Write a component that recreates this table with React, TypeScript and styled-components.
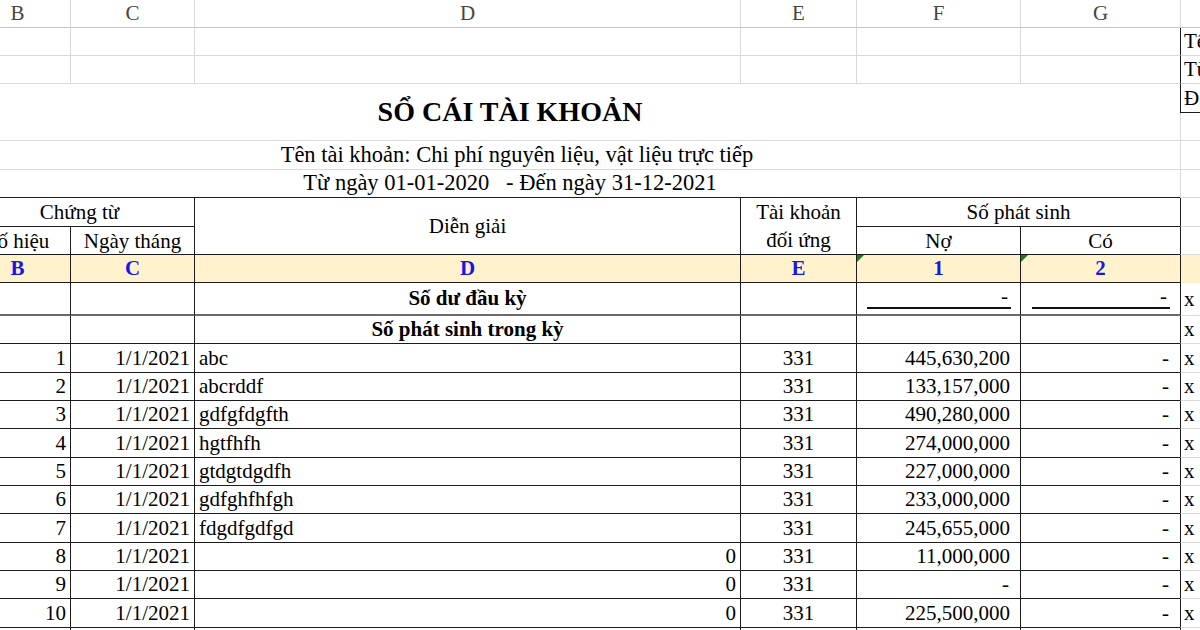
import React from 'react';
import styled, { createGlobalStyle } from 'styled-components';

const Global = createGlobalStyle`
  html, body { margin: 0; padding: 0; background: #fff; overflow: hidden; }
  body { font-family: "Liberation Serif", "Times New Roman", serif; color: #000; }
`;

const GRID = '#d9d9d9';
const HEADLINE = '#c6c6c6';
const INK = '#1c1c1c';
const FILL = '#fff2cc';

const COLS = [106, 124, 546, 116, 164, 159, 120];
const ROWS = [28, 28, 28, 29, 28, 29, 28, 29, 28, 28, 33, 28, 29, 28, 28, 29, 28, 28, 29, 28, 28, 29, 28];

const Sheet = styled.div`
  display: grid;
  grid-template-columns: ${COLS.map((c) => `${c}px`).join(' ')};
  grid-template-rows: ${ROWS.map((r) => `${r}px`).join(' ')};
  margin-left: -35px;
  width: ${COLS.reduce((a, b) => a + b, 0)}px;
`;

interface Place {
  $col: number;
  $row: number;
  $cs?: number;
  $rs?: number;
  $r?: string;
  $b?: string;
  $bw?: number;
  $l?: string;
  $fill?: string;
}

const Cell = styled.div<Place>`
  grid-column: ${(p) => `${p.$col} / span ${p.$cs ?? 1}`};
  grid-row: ${(p) => `${p.$row} / span ${p.$rs ?? 1}`};
  box-sizing: border-box;
  min-width: 0;
  display: flex;
  align-items: center;
  overflow: hidden;
  white-space: nowrap;
  position: relative;
  font-size: 21px;
  line-height: 1;
  background: ${(p) => p.$fill ?? 'transparent'};
  border-right: ${(p) => (p.$r ? `1px solid ${p.$r}` : '0')};
  border-bottom: ${(p) => (p.$b ? `${p.$bw ?? 1}px solid ${p.$b}` : '0')};
  border-left: ${(p) => (p.$l ? `1px solid ${p.$l}` : '0')};
`;

const Letter = styled(Cell)`
  justify-content: center;
  color: #454545;
  font-size: 21px;
`;

const Banner = styled(Cell)<{ $shift: number; $title?: boolean }>`
  justify-content: center;
  padding-right: ${(p) => p.$shift}px;
  font-size: ${(p) => (p.$title ? 28 : 22.5)}px;
  font-weight: ${(p) => (p.$title ? 700 : 400)};
`;

const Head = styled(Cell)`
  justify-content: center;
  text-align: center;
  white-space: normal;
  line-height: 28px;
`;

const Code = styled(Cell)<{ $flag?: boolean }>`
  justify-content: center;
  font-weight: 700;
  color: #1616e6;
  background: ${FILL};
  &::before {
    content: '';
    display: ${(p) => (p.$flag ? 'block' : 'none')};
    position: absolute;
    top: 0;
    left: 0;
    border-top: 7px solid #1d7a1d;
    border-right: 7px solid transparent;
  }
`;

const Body = styled(Cell)<{ $align?: 'left' | 'center' | 'right'; $pad?: number; $bold?: boolean }>`
  justify-content: ${(p) =>
    p.$align === 'right' ? 'flex-end' : p.$align === 'center' ? 'center' : 'flex-start'};
  padding: 0 ${(p) => p.$pad ?? 4}px;
  font-weight: ${(p) => (p.$bold ? 700 : 400)};
`;

const Opening = styled(Cell)<{ $left: number; $right: number }>`
  align-items: flex-end;
  padding: 0 ${(p) => p.$right}px 5px ${(p) => p.$left}px;
`;

const Underlined = styled.span`
  display: block;
  flex: 1;
  text-align: right;
  line-height: 22px;
  padding-right: 3px;
  border-bottom: 2px solid #111;
`;

const Mark = styled(Cell)`
  padding-left: 3px;
`;

type Entry = { no: number; desc: string | null; debit: string };

const ENTRIES: Entry[] = [
  { no: 1, desc: 'abc', debit: '445,630,200' },
  { no: 2, desc: 'abcrddf', debit: '133,157,000' },
  { no: 3, desc: 'gdfgfdgfth', debit: '490,280,000' },
  { no: 4, desc: 'hgtfhfh', debit: '274,000,000' },
  { no: 5, desc: 'gtdgtdgdfh', debit: '227,000,000' },
  { no: 6, desc: 'gdfghfhfgh', debit: '233,000,000' },
  { no: 7, desc: 'fdgdfgdfgd', debit: '245,655,000' },
  { no: 8, desc: null, debit: '11,000,000' },
  { no: 9, desc: null, debit: '-' },
  { no: 10, desc: null, debit: '225,500,000' },
  { no: 11, desc: null, debit: '' },
];

const LETTERS = ['B', 'C', 'D', 'E', 'F', 'G'];

export default function App() {
  return (
    <>
      <Global />
      <Sheet>
        {LETTERS.map((l, i) => (
          <Letter key={l} $col={i + 1} $row={1} $r={i < 5 ? GRID : undefined} $b={HEADLINE}>
            {l}
          </Letter>
        ))}
        <Letter $col={7} $row={1} $l={GRID} $b={HEADLINE} />

        {[2, 3].map((row) =>
          LETTERS.map((l, i) => (
            <Cell key={`${row}${l}`} $col={i + 1} $row={row} $r={i < 5 ? GRID : undefined} $b={GRID} />
          ))
        )}
        <Mark $col={7} $row={2} $l={INK} $b={GRID}>Tê</Mark>
        <Mark $col={7} $row={3} $l={INK} $b={GRID}>Từ</Mark>
        <Mark $col={7} $row={4} $l={INK} $b={INK}>Đ</Mark>
        <Mark $col={7} $row={5} $l={GRID} $b={GRID} />
        <Mark $col={7} $row={6} $l={GRID} $b={GRID} />
        <Mark $col={7} $row={7} $l={GRID} $b={GRID} />

        <Banner $col={1} $cs={6} $row={4} $rs={2} $b={GRID} $shift={125} $title>
          SỔ CÁI TÀI KHOẢN
        </Banner>
        <Banner $col={1} $cs={6} $row={6} $b={GRID} $shift={111}>
          Tên tài khoản: Chi phí nguyên liệu, vật liệu trực tiếp
        </Banner>
        <Banner $col={1} $cs={6} $row={7} $b={INK} $shift={125}>
          Từ ngày 01-01-2020&nbsp;&nbsp;&nbsp;- Đến ngày 31-12-2021
        </Banner>

        <Head $col={1} $cs={2} $row={8} $r={INK} $b={INK}>Chứng từ</Head>
        <Head $col={3} $row={8} $rs={2} $r={INK} $b={INK}>Diễn giải</Head>
        <Head $col={4} $row={8} $rs={2} $r={INK} $b={INK}>Tài khoản<br />đối ứng</Head>
        <Head $col={5} $cs={2} $row={8} $b={INK}>Số phát sinh</Head>
        <Mark $col={7} $row={8} $l={INK} $b={GRID} />
        <Head $col={1} $row={9} $r={INK} $b={INK}>Số hiệu</Head>
        <Head $col={2} $row={9} $r={INK} $b={INK}>Ngày tháng</Head>
        <Head $col={5} $row={9} $r={INK} $b={INK}>Nợ</Head>
        <Head $col={6} $row={9} $b={INK}>Có</Head>
        <Mark $col={7} $row={9} $l={INK} $b={GRID} />

        {['B', 'C', 'D', 'E', '1', '2'].map((c, i) => (
          <Code key={c} $col={i + 1} $row={10} $r={i < 5 ? INK : undefined} $b={INK} $flag={i >= 4}>
            {c}
          </Code>
        ))}
        <Mark $col={7} $row={10} $l={INK} $fill={FILL} />

        <Cell $col={1} $row={11} $r={INK} $b="#6a6a6a" $bw={2} />
        <Cell $col={2} $row={11} $r={INK} $b="#6a6a6a" $bw={2} />
        <Body $col={3} $row={11} $r={INK} $b="#6a6a6a" $bw={2} $align="center" $bold>Số dư đầu kỳ</Body>
        <Cell $col={4} $row={11} $r={INK} $b="#6a6a6a" $bw={2} />
        <Opening $col={5} $row={11} $r={INK} $b="#6a6a6a" $bw={2} $left={10} $right={9}>
          <Underlined>-</Underlined>
        </Opening>
        <Opening $col={6} $row={11} $b="#6a6a6a" $bw={2} $left={11} $right={10}>
          <Underlined>-</Underlined>
        </Opening>
        <Mark $col={7} $row={11} $l={INK} $b={GRID}>x</Mark>

        <Cell $col={1} $row={12} $r={INK} $b={INK} />
        <Cell $col={2} $row={12} $r={INK} $b={INK} />
        <Body $col={3} $row={12} $r={INK} $b={INK} $align="center" $bold>Số phát sinh trong kỳ</Body>
        <Cell $col={4} $row={12} $r={INK} $b={INK} />
        <Cell $col={5} $row={12} $r={INK} $b={INK} />
        <Cell $col={6} $row={12} $b={INK} />
        <Mark $col={7} $row={12} $l={INK} $b={GRID}>x</Mark>

        {ENTRIES.map((e, i) => {
          const row = 13 + i;
          const filled = e.no <= 10;
          return (
            <React.Fragment key={e.no}>
              <Body $col={1} $row={row} $r={INK} $b={INK} $align="right">{filled ? e.no : ''}</Body>
              <Body $col={2} $row={row} $r={INK} $b={INK} $align="right">{filled ? '1/1/2021' : ''}</Body>
              <Body $col={3} $row={row} $r={INK} $b={INK} $align={e.desc ? 'left' : 'right'}>
                {filled ? e.desc ?? '0' : ''}
              </Body>
              <Body $col={4} $row={row} $r={INK} $b={INK} $align="center">{filled ? '331' : ''}</Body>
              <Body $col={5} $row={row} $r={INK} $b={INK} $align="right" $pad={e.debit === '-' ? 11 : 10}>
                {e.debit}
              </Body>
              <Body $col={6} $row={row} $b={INK} $align="right" $pad={11}>{filled ? '-' : ''}</Body>
              <Mark $col={7} $row={row} $l={INK} $b={GRID}>{filled ? 'x' : ''}</Mark>
            </React.Fragment>
          );
        })}
      </Sheet>
    </>
  );
}
